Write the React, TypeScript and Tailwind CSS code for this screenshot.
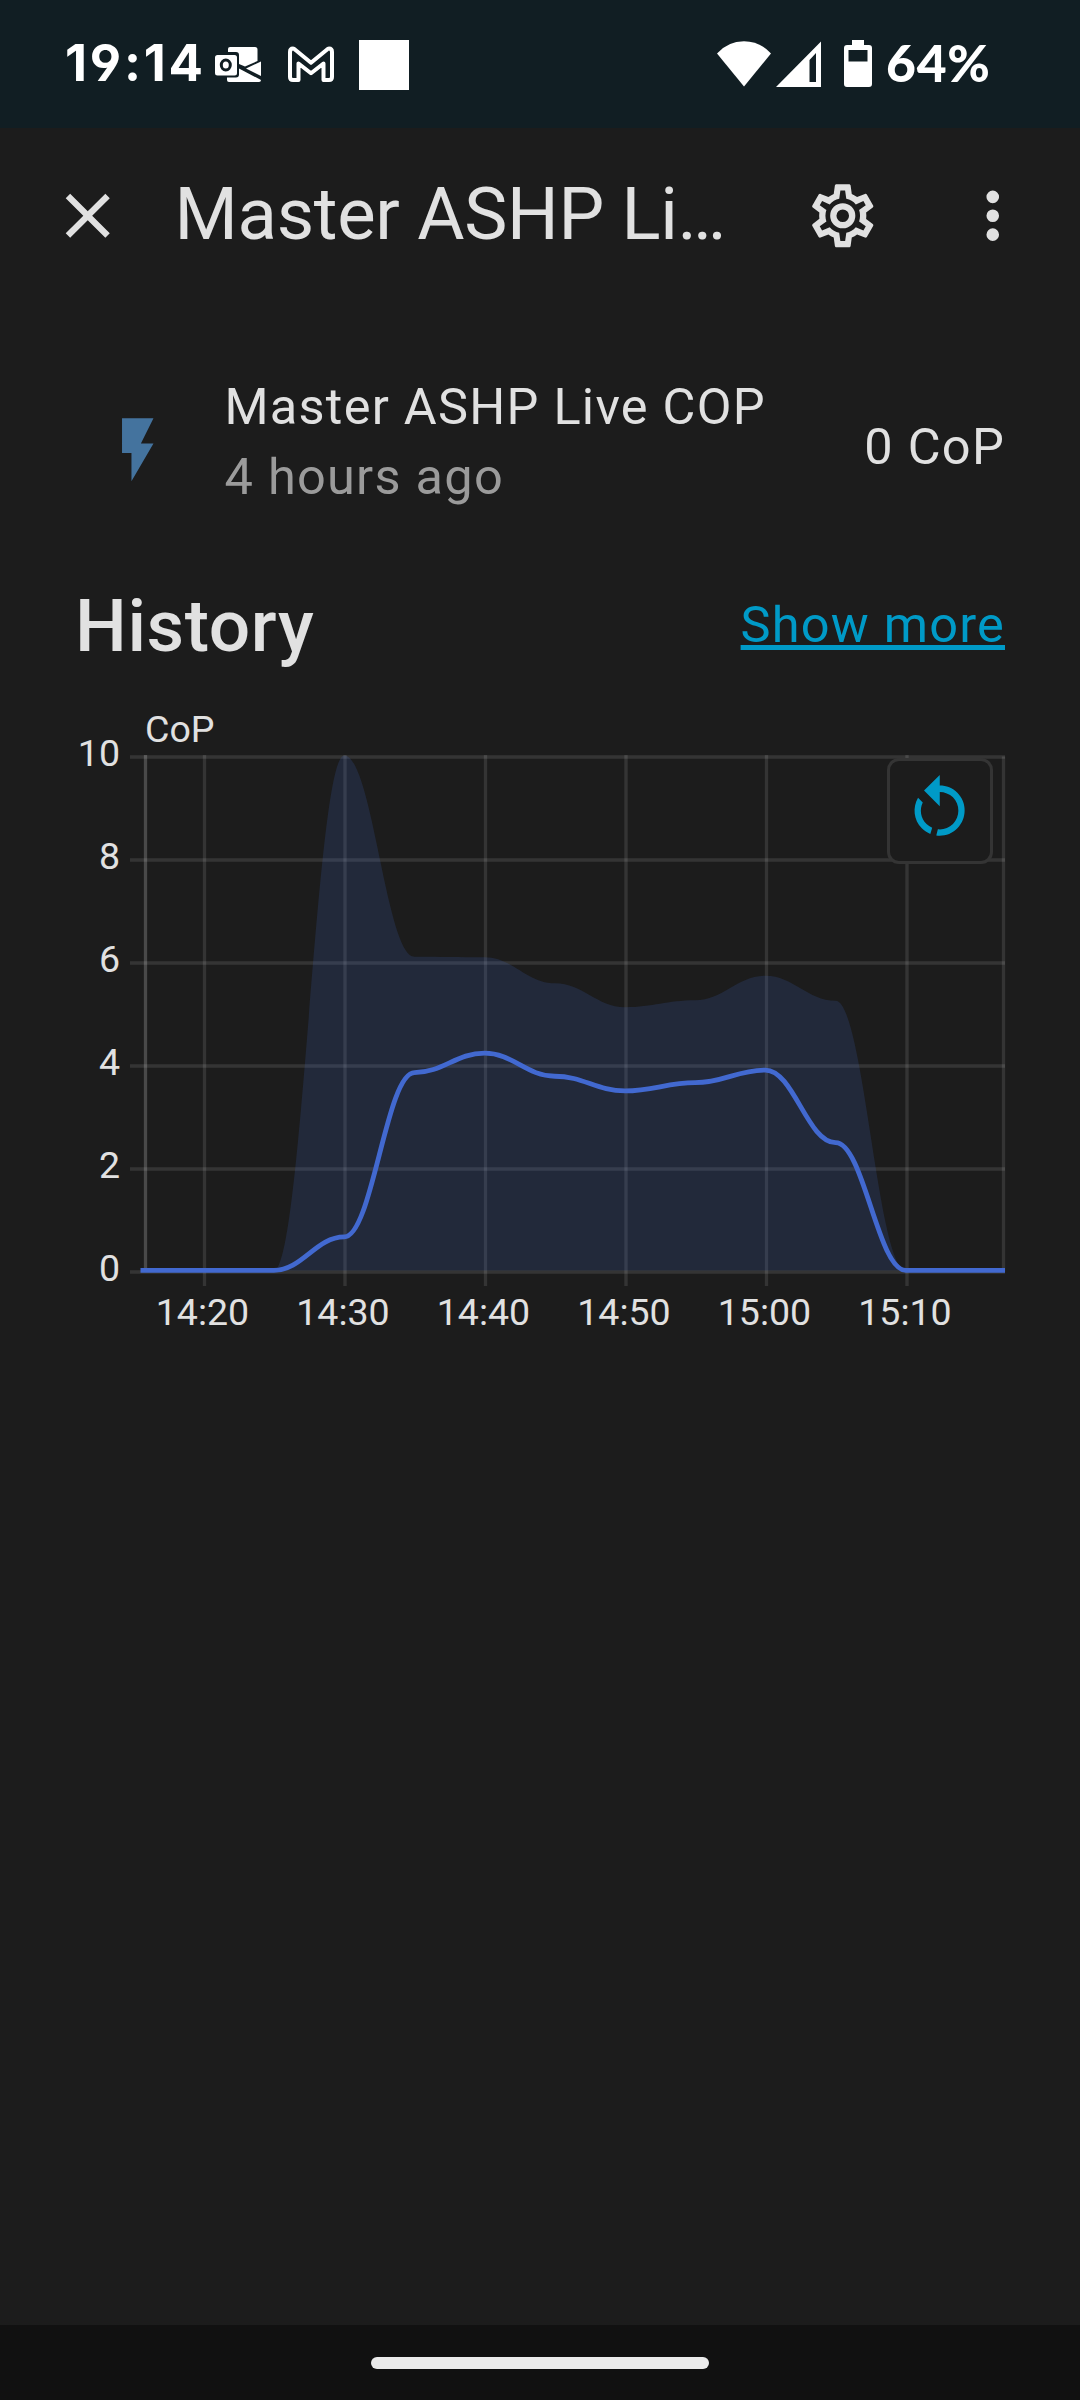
import { useState } from "react";

const icons = {
  close:
    "M19,6.41L17.59,5L12,10.59L6.41,5L5,6.41L10.59,12L5,17.59L6.41,19L12,13.41L17.59,19L19,17.59L13.41,12L19,6.41Z",
  cog: "M12,8A4,4 0 0,1 16,12A4,4 0 0,1 12,16A4,4 0 0,1 8,12A4,4 0 0,1 12,8M12,10A2,2 0 0,0 10,12A2,2 0 0,0 12,14A2,2 0 0,0 14,12A2,2 0 0,0 12,10M10,22C9.75,22 9.54,21.82 9.5,21.58L9.13,18.93C8.5,18.68 7.96,18.34 7.44,17.94L4.95,18.95C4.73,19.03 4.46,18.95 4.34,18.73L2.34,15.27C2.21,15.05 2.27,14.78 2.46,14.63L4.57,12.97L4.5,12L4.57,11L2.46,9.37C2.27,9.22 2.21,8.95 2.34,8.73L4.34,5.27C4.46,5.05 4.73,4.96 4.95,5.05L7.44,6.05C7.96,5.66 8.5,5.32 9.13,5.07L9.5,2.42C9.54,2.18 9.75,2 10,2H14C14.25,2 14.46,2.18 14.5,2.42L14.87,5.07C15.5,5.32 16.04,5.66 16.56,6.05L19.05,5.05C19.27,4.96 19.54,5.05 19.66,5.27L21.66,8.73C21.79,8.95 21.73,9.22 21.54,9.37L19.43,11L19.5,12L19.43,13L21.54,14.63C21.73,14.78 21.79,15.05 21.66,15.27L19.66,18.73C19.54,18.95 19.27,19.04 19.05,18.95L16.56,17.95C16.04,18.34 15.5,18.68 14.87,18.93L14.5,21.58C14.46,21.82 14.25,22 14,22H10M11.25,4L10.88,6.61C9.68,6.86 8.62,7.5 7.85,8.39L5.44,7.35L4.69,8.65L6.8,10.2C6.4,11.37 6.4,12.64 6.8,13.8L4.68,15.36L5.43,16.66L7.86,15.62C8.63,16.5 9.68,17.14 10.87,17.38L11.24,20H12.76L13.13,17.39C14.32,17.14 15.37,16.5 16.14,15.62L18.57,16.66L19.32,15.36L17.2,13.81C17.6,12.64 17.6,11.37 17.2,10.2L19.31,8.65L18.56,7.35L16.15,8.39C15.38,7.5 14.32,6.86 13.12,6.62L12.75,4H11.25Z",
  dots: "M12,16A2,2 0 0,1 14,18A2,2 0 0,1 12,20A2,2 0 0,1 10,18A2,2 0 0,1 12,16M12,10A2,2 0 0,1 14,12A2,2 0 0,1 12,14A2,2 0 0,1 10,12A2,2 0 0,1 12,10M12,4A2,2 0 0,1 14,6A2,2 0 0,1 12,8A2,2 0 0,1 10,6A2,2 0 0,1 12,4Z",
  flash: "M7,2V13H10V22L17,10H13L17,2H7Z",
  restart:
    "M12,4C14.1,4 16.1,4.8 17.6,6.3C20.7,9.4 20.7,14.5 17.6,17.6C15.8,19.5 13.3,20.2 10.9,19.9L11.4,17.9C13.1,18.1 14.9,17.5 16.2,16.2C18.5,13.9 18.5,10.1 16.2,7.7C15.1,6.6 13.5,6 12,6V10.6L7,5.6L12,0.6V4M6.3,17.6C3.7,15 3.3,11 5.1,7.9L6.6,9.4C5.5,11.6 5.9,14.4 7.8,16.2C8.3,16.7 8.9,17.1 9.6,17.4L9,19.4C8,19 7.1,18.4 6.3,17.6Z",
};

function Icon({ path, className }: { path: string; className?: string }) {
  return (
    <svg
      viewBox="0 0 24 24"
      fill="currentColor"
      className={`size-[75.5px] shrink-0 ${className ?? ""}`}
    >
      <path d={path} />
    </svg>
  );
}

function StatusBar() {
  return (
    <div className="flex h-32 shrink-0 items-start bg-[#111e23] pl-[65px] text-white">
      <span className="mt-[30.5px] w-[150px] font-['Inter',sans-serif] text-[51px] leading-[64px] font-bold tracking-[2.8px] whitespace-nowrap [font-feature-settings:'cv04']">
        19:14
      </span>
      {/* Outlook */}
      <svg viewBox="0 0 46 36" className="mt-[46px] h-9 w-[46px]">
        <path
          fill="#fff"
          d="M15 1h25a2.500 2.500 0 0 1 2.500 2.500V15L30 20.500l-6-2.500V9a3 3 0 0 0-3-3h-8V3a2 2 0 0 1 2-2z"
        />
        <path fill="#fff" d="M46 15.500V30L31 22.500zM24 22.500L46 34a2 2 0 0 1-2 2H14a2 2 0 0 1-2-2v-2.500h9a3 3 0 0 0 3-3z" />
        <rect y="9" width="22" height="20.500" rx="2.500" fill="#fff" />
        <ellipse cx="10.800" cy="19" rx="4.500" ry="5" fill="none" stroke="#111e23" strokeWidth="3" />
      </svg>
      {/* Gmail */}
      <svg viewBox="0 0 46 36" className="mt-[46px] ml-[27px] h-9 w-[46px]">
        <path
          fill="none"
          stroke="#fff"
          strokeWidth="4"
          strokeLinejoin="round"
          d="M2 31V6Q2 2.500 5 2.500Q6 2.500 7.500 4L23 16.800L38.500 4Q40 2.500 41 2.500Q44 2.500 44 6V31Q44 34 41 34H35.500V17.500L23 27.300L10.500 17.500V34H5Q2 34 2 31z"
        />
      </svg>
      <div className="mt-10 ml-[25px] size-[50px] bg-white" />
      {/* Wi-Fi */}
      <svg viewBox="0 0 54 46" className="mt-[41px] ml-[308px] h-[46px] w-[54px]">
        <path fill="#fff" d="M0 12.500Q11 .3 27 .3T54 12.500L27 45.500z" />
      </svg>
      {/* Mobile signal */}
      <svg viewBox="0 0 46 46" className="mt-[41px] ml-[5px] size-[46px]">
        <path fill="#fff" fillRule="evenodd" d="M0 46L45 .5V46zM33.500 19V41H40V12z" />
      </svg>
      {/* Battery */}
      <svg viewBox="0 0 28 47" className="mt-10 ml-[22px] h-[47px] w-7">
        <path
          fill="#fff"
          fillRule="evenodd"
          d="M8 0h12v5h5a3 3 0 0 1 3 3v36a3 3 0 0 1-3 3H3a3 3 0 0 1-3-3V8a3 3 0 0 1 3-3h5zM4.500 10v11.500h19V10z"
        />
      </svg>
      <span className="mt-[29.5px] ml-[14px] font-['Lato',sans-serif] text-[51.500px] leading-[64px] font-black tracking-[0.8px] whitespace-nowrap">
        64%
      </span>
    </div>
  );
}

// plot area of the chart, in pixels
const PLOT = { left: 145.500, right: 1003.500, top: 66.500, bottom: 582 };
const UNIT = 51.500;
const STEP = 70.200;

// five minute buckets, starting at 14:25
const maxValues = [0, 10, 6.09, 6.08, 5.575, 5.11, 5.245, 5.72, 5.235, 0];
const meanValues = [0, 0.65, 3.84, 4.22, 3.77, 3.485, 3.645, 3.89, 2.48, 0];

const yTicks = [0, 2, 4, 6, 8, 10];
const xTicks = ["14:20", "14:30", "14:40", "14:50", "15:00", "15:10"];

function smoothPath(values: number[]) {
  const px = (i: number) => 274 + i * STEP;
  const py = (v: number) => 580.4 - v * UNIT;
  let d = `M140.500 ${py(0)}H${px(0)}`;
  for (let i = 1; i < values.length; i++) {
    const y0 = py(values[i - 1]);
    const y1 = py(values[i]);
    d += `C${px(i - 1) + STEP * 0.4} ${y0} ${px(i) - STEP * 0.4} ${y1} ${px(i)} ${y1}`;
  }
  return d + `H1005`;
}

function HistoryChart() {
  return (
    <svg
      viewBox="0 0 1080 660"
      className="block h-[660px] w-[1080px] font-['Roboto',sans-serif] text-[37.5px]"
    >
      <g stroke="#fff" strokeOpacity="0.11" strokeWidth="3.3">
        {yTicks.map((t) => (
          <path key={t} d={`M130 ${PLOT.bottom - t * UNIT}H1005`} />
        ))}
        {xTicks.map((t, i) => (
          <path key={t} d={`M${204.500 + i * 140.5} 65V596`} />
        ))}
        <path d={`M${PLOT.right} ${PLOT.top}V${PLOT.bottom}`} />
        <path d={`M${PLOT.left} 65V${PLOT.bottom}`} strokeOpacity="0.2" />
      </g>
      <path d={smoothPath(maxValues) + "Z"} fill="#4269d0" fillOpacity="0.17" />
      <path d={smoothPath(meanValues)} fill="none" stroke="#4269d0" strokeWidth="4.8" />
      <g fill="#e1e1e1">
        <text x="145" y="51.500">
          CoP
        </text>
        {yTicks.map((t) => (
          <text key={t} x="120" y={591.200 - t * UNIT} textAnchor="end">
            {t}
          </text>
        ))}
        {xTicks.map((t, i) => (
          <text key={t} x={202.500 + i * 140.5} y="634.500" textAnchor="middle">
            {t}
          </text>
        ))}
      </g>
    </svg>
  );
}

export default function App() {
  const [zoomed, setZoomed] = useState(true);

  return (
    <div className="flex h-[2400px] w-[1080px] flex-col overflow-hidden bg-[#1c1c1c] font-['Roboto',sans-serif] text-[#e1e1e1]">
      <StatusBar />

      <header className="flex h-[175px] shrink-0 items-center pl-[50px]">
        <Icon path={icons.close} />
        <h1 className="ml-[49px] w-[560px] pb-px text-[72.5px] leading-[90px] tracking-[-0.3px] whitespace-nowrap">
          Master ASHP Li…
        </h1>
        <Icon path={icons.cog} className="ml-[70px]" />
        <Icon path={icons.dots} className="ml-[75px]" />
      </header>

      <main className="flex grow flex-col pt-[69px]">
        <div className="flex h-[140px] items-start pr-[75px] pl-[100px] text-[50.500px] leading-[70px] tracking-[1.25px]">
          <Icon path={icons.flash} className="mt-[40px] text-[#44739e]" />
          <div className="ml-[49px] grow">
            <div>Master ASHP Live COP</div>
            <div className="text-[#9b9b9b]">4 hours ago</div>
          </div>
          <div className="mt-[40px]">0 CoP</div>
        </div>

        <div className="mt-[70px] flex h-[88px] items-center justify-between pr-[75px] pl-[75px]">
          <h2 className="text-[73px] leading-[88px] font-medium tracking-[0.6px]">History</h2>
          <a
            href="#"
            className="pb-[3px] text-[50.500px] leading-[70px] tracking-[1.2px] text-[#009ac7] underline decoration-[5px] underline-offset-[3px]"
          >
            Show more
          </a>
        </div>

        <div className="relative mt-5">
          <HistoryChart />
          {zoomed && (
            <button
              onClick={() => setZoomed(false)}
              className="absolute top-[68px] left-[887px] flex size-[106px] items-center justify-center rounded-[12px] border-3 border-[#343434] bg-[#1c1c1c] text-[#009ac7]"
            >
              <Icon path={icons.restart} />
            </button>
          )}
        </div>
      </main>

      <div className="flex h-[75px] shrink-0 justify-center bg-[#111] pt-8">
        <div className="h-3 w-[338px] rounded-full bg-[#ebebeb]" />
      </div>
    </div>
  );
}
